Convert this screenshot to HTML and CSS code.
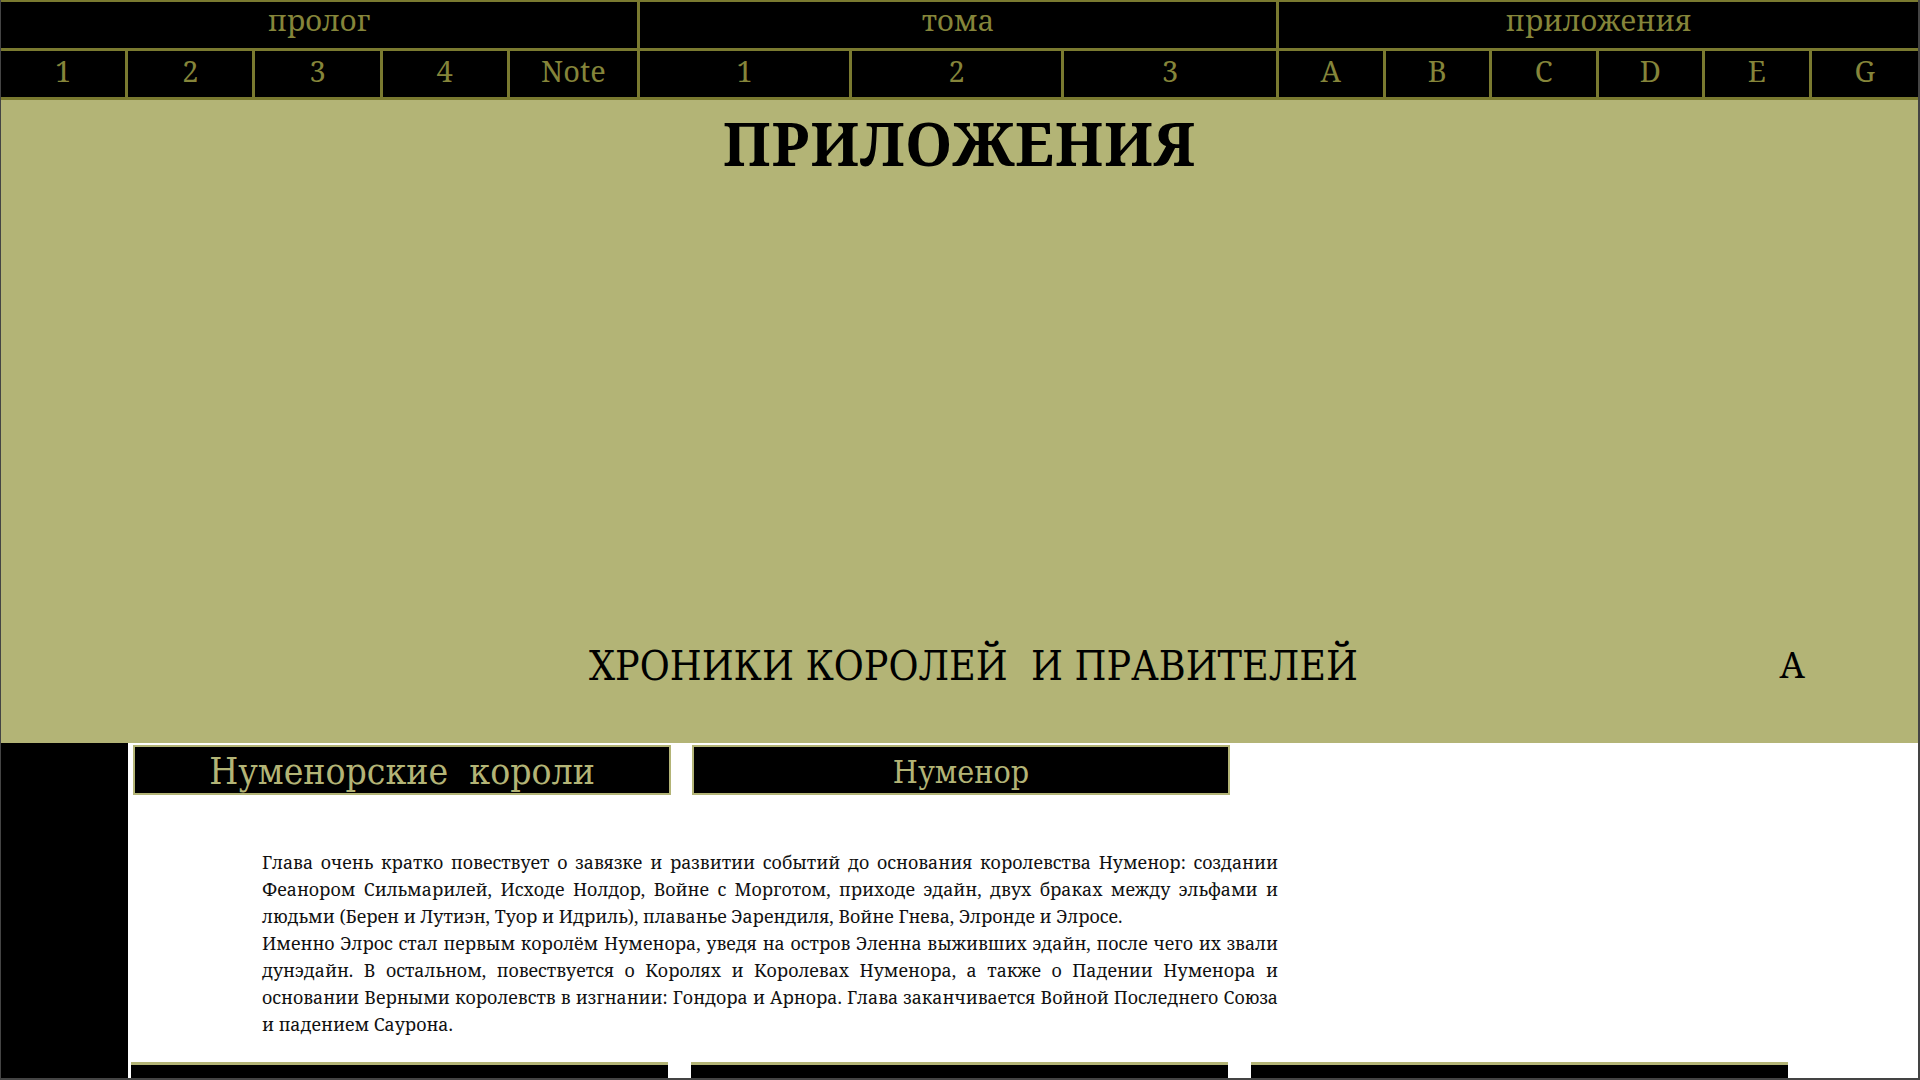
FILE: index.html
```html
<!DOCTYPE html>
<html lang="ru">
<head>
<meta charset="utf-8">
<title>Приложения</title>
<link rel="stylesheet" href="styles.css">
</head>
<body>
<div class="page">
  <nav class="nav">
    <div class="group">
      <div class="group-title">пролог</div>
      <div class="subs five">
        <a class="sub">1</a><a class="sub">2</a><a class="sub">3</a><a class="sub">4</a><a class="sub">Note</a>
      </div>
    </div>
    <div class="group">
      <div class="group-title">тома</div>
      <div class="subs three">
        <a class="sub">1</a><a class="sub">2</a><a class="sub">3</a>
      </div>
    </div>
    <div class="group last">
      <div class="group-title">приложения</div>
      <div class="subs six">
        <a class="sub">A</a><a class="sub">B</a><a class="sub">C</a><a class="sub">D</a><a class="sub">E</a><a class="sub">G</a>
      </div>
    </div>
  </nav>

  <header class="hero">
    <h1 class="hero-title">ПРИЛОЖЕНИЯ</h1>
    <div class="hero-sub">
      <span></span>
      <h2 class="chapter">ХРОНИКИ КОРОЛЕЙ &nbsp;И ПРАВИТЕЛЕЙ</h2>
      <span class="letter">A</span>
    </div>
  </header>

  <div class="content">
    <aside class="side"></aside>
    <main class="main">
      <div class="tabs">
        <div class="tab big">Нуменорские&nbsp; короли</div>
        <div class="tab">Нуменор</div>
      </div>
      <div class="text">
        <p>Глава очень кратко повествует о завязке и развитии событий до основания королевства Нуменор: создании Феанором Сильмарилей, Исходе Нолдор, Войне с Морготом, приходе эдайн, двух браках между эльфами и людьми (Берен и Лутиэн, Туор и Идриль), плаванье Эарендиля, Войне Гнева, Элронде и Элросе.</p>
        <p>Именно Элрос стал первым королём Нуменора, уведя на остров Эленна выживших эдайн, после чего их звали дунэдайн. В остальном, повествуется о Королях и Королевах Нуменора, а также о Падении Нуменора и основании Верными королевств в изгнании: Гондора и Арнора. Глава заканчивается Войной Последнего Союза и падением Саурона.</p>
      </div>
      <div class="cards">
        <div class="card"><span class="card-title">Нуменор</span></div>
        <div class="card"></div>
        <div class="card"></div>
      </div>
    </main>
  </div>
</div>
</body>
</html>
```

FILE: styles.css
```css
html, body {
  margin: 0;
  padding: 0;
  background: #ffffff;
}

.page {
  width: 1920px;
  height: 1080px;
  box-sizing: border-box;
  border-left: 1px solid #444444;
  border-right: 2px solid #444444;
  border-bottom: 2px solid #444444;
  overflow: hidden;
  display: flex;
  flex-direction: column;
  font-family: "Noto Serif", "DejaVu Serif", serif;
}

/* ---------- navigation ---------- */
.nav {
  display: grid;
  grid-template-columns: 1fr 1fr 1fr;
  background: #000000;
  border-top: 2px solid #7a7a30;
  border-bottom: 3px solid #7a7a30;
}

.group {
  display: flex;
  flex-direction: column;
  border-right: 3px solid #7a7a30;
}
.group.last { border-right: none; }

.group-title {
  height: 49px;
  box-sizing: border-box;
  padding-bottom: 12px;
  display: flex;
  align-items: center;
  justify-content: center;
  border-bottom: 3px solid #7a7a30;
  color: #85853a;
  font-size: 29px;
  line-height: 1;
}

.subs {
  display: grid;
  height: 46px;
}
.subs.five { grid-template-columns: repeat(5, 1fr); }
.subs.three { grid-template-columns: repeat(3, 1fr); }
.subs.six { grid-template-columns: repeat(6, 1fr); }

.sub {
  display: flex;
  align-items: center;
  justify-content: center;
  box-sizing: border-box;
  padding-bottom: 8px;
  color: #85853a;
  font-size: 29px;
  line-height: 1;
  border-right: 3px solid #7a7a30;
}
.sub:last-child { border-right: none; }

/* ---------- hero ---------- */
.hero {
  height: 643px;
  flex: none;
  background: #b3b476;
  display: flex;
  flex-direction: column;
  padding-bottom: 48px;
  box-sizing: border-box;
}

.hero-title {
  margin: 7px 0 0;
  text-align: center;
  font-size: 60px;
  font-weight: 700;
  line-height: 1.2;
  color: #000000;
  letter-spacing: 0.5px;
}

.hero-sub {
  margin-top: auto;
  display: grid;
  grid-template-columns: 1fr auto 1fr;
  align-items: center;
}

.chapter {
  margin: 0;
  padding-left: 28px;
  font-family: "DejaVu Serif", serif;
  font-stretch: condensed;
  font-weight: 400;
  font-size: 40.7px;
  line-height: 56px;
  color: #000000;
  white-space: nowrap;
}

.letter {
  justify-self: end;
  margin-right: 113px;
  padding-bottom: 2px;
  font-size: 36px;
  line-height: 56px;
  color: #000000;
}

/* ---------- content ---------- */
.content {
  flex: 1;
  display: flex;
  min-height: 0;
}

.side {
  width: 127px;
  flex: none;
  background: #000000;
}

.main {
  flex: 1;
  background: #ffffff;
  display: flex;
  flex-direction: column;
}

.tabs {
  display: flex;
  gap: 21px;
  padding: 2px 0 0 5px;
}

.tab {
  width: 538px;
  height: 50px;
  box-sizing: border-box;
  border: 2px solid #b3b476;
  background: #000000;
  color: #b3b476;
  display: flex;
  align-items: center;
  justify-content: center;
  padding-top: 4px;
  font-family: "DejaVu Serif", serif;
  font-stretch: condensed;
  font-size: 32px;
  line-height: 1;
}
.tab.big { font-size: 37px; padding-top: 2px; }

.text {
  width: 1016px;
  margin: 54px 0 0 134px;
  font-size: 17.8px;
  line-height: 27px;
  color: #111111;
  text-align: justify;
}
.text p { margin: 0; }

.cards {
  display: grid;
  grid-template-columns: repeat(3, 537px);
  gap: 23px;
  padding-left: 3px;
  margin-top: 24px;
}

.card {
  height: 40px;
  background: #000000;
  border-top: 3px solid #b3b476;
  padding: 10px 0 0 76px;
  box-sizing: border-box;
}

.card-title {
  color: #b3b476;
  font-family: "DejaVu Serif", serif;
  font-stretch: condensed;
  font-size: 34px;
  line-height: 1;
}
```
